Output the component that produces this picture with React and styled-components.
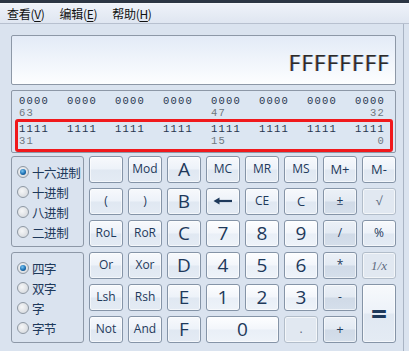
import React from 'react'
import styled, { createGlobalStyle, css } from 'styled-components'

const GlobalStyle = createGlobalStyle`
  html, body {
    margin: 0;
    padding: 0;
    background: #dae3ef;
  }
  body {
    font-family: "Open Sans", "Noto Sans CJK SC", sans-serif;
    color: #1e395b;
  }
`

const Window = styled.div`
  width: 409px;
  height: 351px;
  overflow: hidden;
  display: flex;
  flex-direction: column;
  background: #dae3ef;
`

const TitleEdge = styled.div`
  height: 3px;
  background: #2c3644;
  border-bottom: 1px solid #f4f7fb;
`

const MenuBar = styled.div`
  height: 19px;
  display: flex;
  align-items: center;
  gap: 15px;
  padding-left: 7px;
  background: linear-gradient(#eef2f9, #dfe6f1);
  border-bottom: 1px solid #b7c0cf;
  font-family: "Noto Sans CJK SC", sans-serif;
  font-size: 12px;
  color: #111;
`

const MenuItem = styled.span`
  letter-spacing: -0.3px;
`

const Key = styled.span`
  text-decoration: underline;
  text-underline-offset: 2px;
`

const Body = styled.div`
  flex: 1;
  display: flex;
  flex-direction: column;
  padding: 11px 0 0 11px;
  width: 392px;
  border-right: 1px solid #a9b4c4;
`

const Display = styled.div`
  width: 385px;
  height: 50px;
  box-sizing: border-box;
  border: 1px solid #8d98a7;
  border-radius: 2px;
  background: linear-gradient(#e3ebf7, #fdfeff);
  display: flex;
  align-items: flex-end;
  justify-content: flex-end;
  padding-right: 5px;
`

const Value = styled.div`
  font-family: "Open Sans", sans-serif;
  font-size: 22px;
  letter-spacing: 1.3px;
  line-height: 1;
  margin-bottom: 11px;
  color: #2a2a2a;
  text-shadow: -0.7px 0 rgba(190, 110, 20, 0.55), 0.7px 0 rgba(40, 120, 220, 0.55);
`

const BitPanel = styled.div`
  margin-top: 5px;
  width: 385px;
  height: 63px;
  box-sizing: border-box;
  border: 1px solid #8d98a7;
  border-radius: 2px;
  background: #dce6f2;
  padding: 4px 0 0 3px;
  display: flex;
  flex-direction: column;
`

const BitBlock = styled.div`
  padding: 0 0 0 4px;
  ${p => p.$marked && css`
    width: 378px;
    height: 34px;
    box-sizing: border-box;
    padding: 1px 0 0 1px;
    border: 3px solid #f0191c;
    border-radius: 3px;
  `}
`

const BitGrid = styled.div`
  display: grid;
  grid-template-columns: repeat(8, 30px);
  grid-auto-rows: 12px;
  column-gap: 18px;
  font-family: "Liberation Mono", "DejaVu Sans Mono", monospace;
  font-size: 10.5px;
  letter-spacing: 1.2px;
  line-height: 12px;
`

const Nibble = styled.span`
  color: #27364f;
`

const BitLabel = styled.span`
  color: #707880;
  text-align: ${p => (p.$right ? 'right' : 'left')};
`

const Keypad = styled.div`
  margin-top: 3px;
  display: flex;
  gap: 5px;
`

const Side = styled.div`
  display: flex;
  flex-direction: column;
  gap: 5px;
`

const Group = styled.div`
  width: 73px;
  height: 91px;
  box-sizing: border-box;
  border: 1px solid #8d98a7;
  border-radius: 3px;
  padding: 5px 0 0 5px;
  display: flex;
  flex-direction: column;
`

const Option = styled.label`
  height: 20px;
  display: flex;
  align-items: center;
  gap: 3px;
  font-family: "Noto Sans CJK SC", sans-serif;
  font-size: 12.5px;
  color: #1e395b;
  letter-spacing: -0.4px;
`

const Radio = styled.span`
  width: 12px;
  height: 12px;
  box-sizing: border-box;
  border-radius: 50%;
  border: 1px solid #8e98a3;
  background: radial-gradient(circle at 40% 40%, #f6f7f8, #cfd3d8);
  display: flex;
  align-items: center;
  justify-content: center;
  &::after {
    content: '';
    width: 6px;
    height: 6px;
    border-radius: 50%;
    background: radial-gradient(circle at 40% 35%, #7cc6f2, #1b6fb3 55%, #0b355f);
    display: ${p => (p.$on ? 'block' : 'none')};
  }
`

const Pad = styled.div`
  display: grid;
  grid-template-columns: repeat(8, 34px);
  grid-auto-rows: 27px;
  gap: 5px;
`

const looks = {
  plain: css`
    border-color: #8594a7;
    background: linear-gradient(#f7f9fc 0%, #edf2f9 48%, #e0e8f2 52%, #e4ebf4 100%);
  `,
  digit: css`
    border-color: #8594a7;
    background: linear-gradient(#fdfeff 0%, #f3f6fb 48%, #e9eff7 52%, #eef3f9 100%);
  `,
  op: css`
    border-color: #8594a7;
    background: linear-gradient(#ecf1f7 0%, #e3eaf3 48%, #d0dae7 52%, #d5dfeb 100%);
  `,
  off: css`
    border-color: #b2bdca;
    background: #e1e8f1;
    color: #5d6b80;
  `,
}

const Key3d = styled.button`
  grid-column: ${p => p.$col} / span ${p => p.$w || 1};
  grid-row: ${p => p.$row} / span ${p => p.$h || 1};
  margin: 0;
  padding: 0 0 1px;
  border: 1px solid;
  border-radius: 3px;
  box-shadow: inset 0 0 0 1px rgba(255, 255, 255, 0.6);
  font-family: "Open Sans", sans-serif;
  font-size: ${p => p.$size || 12}px;
  font-weight: ${p => (p.$bold ? 700 : 400)};
  color: #1e395b;
  line-height: 1;
  display: flex;
  align-items: center;
  justify-content: center;
  ${p => looks[p.$look || 'plain']}
`

const Italic = styled.span`
  font-family: "Liberation Serif", serif;
  font-style: italic;
  font-size: 13px;
`

const BackArrow = () => (
  <svg width="20" height="8" viewBox="0 0 20 8">
    <path d="M5 4H19" stroke="#1e395b" strokeWidth="2.2" />
    <path d="M0.5 4L6.5 0.5V7.5Z" fill="#1e395b" />
  </svg>
)

const keys = [
  // column 1
  [1, 1, '', 'plain'], [1, 2, '(', 'plain'], [1, 3, 'RoL', 'plain'],
  [1, 4, 'Or', 'plain'], [1, 5, 'Lsh', 'plain'], [1, 6, 'Not', 'plain'],
  // column 2
  [2, 1, 'Mod', 'plain'], [2, 2, ')', 'plain'], [2, 3, 'RoR', 'plain'],
  [2, 4, 'Xor', 'plain'], [2, 5, 'Rsh', 'plain'], [2, 6, 'And', 'plain'],
  // column 3
  [3, 1, 'A', 'plain', 19], [3, 2, 'B', 'plain', 19], [3, 3, 'C', 'plain', 19],
  [3, 4, 'D', 'plain', 19], [3, 5, 'E', 'plain', 19], [3, 6, 'F', 'plain', 19],
  // column 4
  [4, 1, 'MC', 'plain'], [4, 3, '7', 'digit', 19],
  [4, 4, '4', 'digit', 19], [4, 5, '1', 'digit', 19],
  // column 5
  [5, 1, 'MR', 'plain'], [5, 2, 'CE', 'plain'], [5, 3, '8', 'digit', 19],
  [5, 4, '5', 'digit', 19], [5, 5, '2', 'digit', 19],
  // column 6
  [6, 1, 'MS', 'plain'], [6, 2, 'C', 'plain', 13], [6, 3, '9', 'digit', 19],
  [6, 4, '6', 'digit', 19], [6, 5, '3', 'digit', 19], [6, 6, '.', 'off'],
  // column 7
  [7, 1, 'M+', 'plain', 13], [7, 2, '±', 'op'], [7, 3, '/', 'op'],
  [7, 4, '*', 'op'], [7, 5, '-', 'op'], [7, 6, '+', 'op', 13],
  // column 8
  [8, 1, 'M-', 'plain', 13], [8, 2, '√', 'off'], [8, 3, '%', 'plain'],
]

const bases = ['十六进制', '十进制', '八进制', '二进制']
const words = ['四字', '双字', '字', '字节']

const BitRows = ({ digit, labels, marked }) => (
  <BitBlock $marked={marked}>
    <BitGrid>
      {Array.from({ length: 8 }).map((_, i) => (
        <Nibble key={i}>{digit.repeat(4)}</Nibble>
      ))}
      <BitLabel>{labels[0]}</BitLabel>
      <span />
      <span />
      <span />
      <BitLabel>{labels[1]}</BitLabel>
      <span />
      <span />
      <BitLabel $right>{labels[2]}</BitLabel>
    </BitGrid>
  </BitBlock>
)

const App = () => {
  return (
    <>
      <GlobalStyle />
      <Window>
        <TitleEdge />
        <MenuBar>
          <MenuItem>查看(<Key>V</Key>)</MenuItem>
          <MenuItem>编辑(<Key>E</Key>)</MenuItem>
          <MenuItem>帮助(<Key>H</Key>)</MenuItem>
        </MenuBar>

        <Body>
          <Display>
            <Value>FFFFFFFF</Value>
          </Display>

          <BitPanel>
            <BitRows digit="0" labels={['63', '47', '32']} />
            <BitRows digit="1" labels={['31', '15', '0']} marked />
          </BitPanel>

          <Keypad>
            <Side>
              <Group>
                {bases.map((b, i) => (
                  <Option key={b}><Radio $on={i === 0} />{b}</Option>
                ))}
              </Group>
              <Group>
                {words.map((w, i) => (
                  <Option key={w}><Radio $on={i === 0} />{w}</Option>
                ))}
              </Group>
            </Side>

            <Pad>
              {keys.map(([col, row, label, look, size]) => (
                <Key3d key={`${col}-${row}`} $col={col} $row={row} $look={look} $size={size}>
                  {label}
                </Key3d>
              ))}
              <Key3d $col={4} $row={2} $look="plain"><BackArrow /></Key3d>
              <Key3d $col={8} $row={4} $look="off"><Italic>1/x</Italic></Key3d>
              <Key3d $col={4} $row={6} $w={2} $look="digit" $size={19}>0</Key3d>
              <Key3d $col={8} $row={5} $h={2} $look="plain" $size={28} $bold>=</Key3d>
            </Pad>
          </Keypad>
        </Body>
      </Window>
    </>
  )
}

export default App
